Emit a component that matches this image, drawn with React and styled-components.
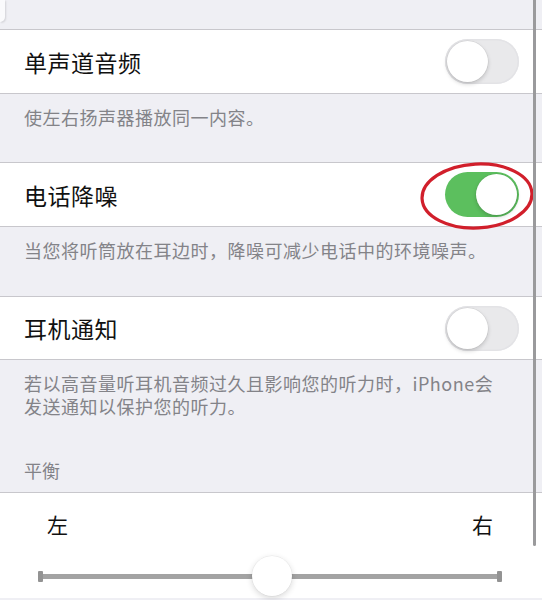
import React from "react";
import styled, { createGlobalStyle } from "styled-components";

const Global = createGlobalStyle`
  html, body { margin: 0; padding: 0; background: #efeff4; }
  body { font-family: "Noto Sans CJK SC", "Noto Sans", sans-serif; -webkit-font-smoothing: antialiased; }
`;

const Screen = styled.div`
  position: relative;
  width: 542px;
  height: 600px;
  overflow: hidden;
  background: #efeff4;
`;

const TopStrip = styled.div`
  height: 29px;
  display: flex;
  align-items: flex-start;
`;

const CardCorner = styled.div`
  width: 5px;
  height: 22px;
  background: #fafafc;
  border-bottom-right-radius: 5px;
  box-shadow: 1px 1px 2px rgba(0, 0, 0, 0.12);
`;

const Cell = styled.div`
  position: relative;
  background: #fff;
  border-top: 1px solid #c8c7cc;
  border-bottom: 1px solid #c8c7cc;
  height: ${(p) => p.$h || 63}px;
  padding: 0 23px 0 24px;
  display: flex;
  align-items: center;
  justify-content: space-between;
  box-sizing: content-box;
`;

const Title = styled.span`
  font-size: 23px;
  color: #111;
  letter-spacing: 0.5px;
`;

const Footer = styled.div`
  height: ${(p) => p.$h}px;
  box-sizing: border-box;
  padding: 12px 20px 0 24px;
  display: flex;
  flex-direction: column;
`;

const FooterText = styled.p`
  margin: 0;
  font-size: 18px;
  line-height: 23px;
  color: #838388;
  letter-spacing: 0.5px;
`;

const GroupHeader = styled.div`
  margin-top: auto;
  padding-bottom: 10px;
  font-size: 18px;
  line-height: 23px;
  color: #838388;
`;

const Track = styled.div`
  position: relative;
  width: 74px;
  height: 45px;
  border-radius: 23px;
  box-sizing: border-box;
  background: ${(p) => (p.$on ? "#5cbf5e" : "#e9e9eb")};
  box-shadow: ${(p) => (p.$on ? "none" : "inset 0 0 0 1.5px #e3e3e6")};
  flex-shrink: 0;
`;

const Knob = styled.div`
  position: absolute;
  top: 2px;
  left: ${(p) => (p.$on ? "31px" : "2px")};
  width: 41px;
  height: 41px;
  border-radius: 50%;
  background: #fff;
  box-shadow: 0 2px 4px rgba(0, 0, 0, 0.18), 0 0 0 0.5px rgba(0, 0, 0, 0.08);
`;

const Circle = styled.svg`
  position: absolute;
  right: 5px;
  top: -2px;
  pointer-events: none;
`;

const Toggle = ({ on }) => (
  <Track $on={on}>
    <Knob $on={on} />
  </Track>
);

const BalanceCell = styled.div`
  background: #fff;
  border-top: 1px solid #c8c7cc;
  height: 105px;
  display: flex;
  flex-direction: column;
`;

const Ends = styled.div`
  display: flex;
  justify-content: space-between;
  padding: 17px 49px 0 47px;
  font-size: 21px;
  line-height: 29px;
  color: #111;
`;

const SliderWrap = styled.div`
  position: relative;
  margin: 17px 40px 0 38px;
  height: 40px;
  display: flex;
  align-items: center;
`;

const Rail = styled.div`
  position: relative;
  flex: 1;
  height: 5px;
  background: #a3a3a3;
`;

const Cap = styled.div`
  position: absolute;
  top: -3px;
  ${(p) => (p.$side === "left" ? "left: 0;" : "right: 0;")}
  width: 5px;
  height: 11px;
  background: #939393;
  border-radius: 1px;
`;

const Thumb = styled.div`
  position: absolute;
  top: 0;
  width: 40px;
  height: 40px;
  margin-left: -20px;
  border-radius: 50%;
  background: #fff;
  box-shadow: 0 2px 6px rgba(0, 0, 0, 0.16), 0 0 0 0.5px rgba(0, 0, 0, 0.06);
`;

const ScrollBar = styled.div`
  position: absolute;
  top: 0;
  right: 6px;
  width: 3px;
  height: 546px;
  border-radius: 0 0 2px 2px;
  background: #9a9a9c;
`;

export default function App() {
  const balance = 0.504;
  return (
    <>
      <Global />
      <Screen>
        <TopStrip>
          <CardCorner />
        </TopStrip>
        <Cell>
          <Title>单声道音频</Title>
          <Toggle on={false} />
        </Cell>
        <Footer $h={68}>
          <FooterText>使左右扬声器播放同一内容。</FooterText>
        </Footer>
        <Cell>
          <Title>电话降噪</Title>
          <Toggle on />
          <Circle width="118" height="70" viewBox="0 0 118 70">
            <ellipse cx="58" cy="35" rx="55" ry="32" fill="none" stroke="#d11f2b" strokeWidth="3.2" transform="rotate(-3 58 35)" />
          </Circle>
        </Cell>
        <Footer $h={69}>
          <FooterText>当您将听筒放在耳边时，降噪可减少电话中的环境噪声。</FooterText>
        </Footer>
        <Cell $h={62}>
          <Title>耳机通知</Title>
          <Toggle on={false} />
        </Cell>
        <Footer $h={132}>
          <FooterText>
            若以高音量听耳机音频过久且影响您的听力时，iPhone会
            <br />
            发送通知以保护您的听力。
          </FooterText>
          <GroupHeader>平衡</GroupHeader>
        </Footer>
        <BalanceCell>
          <Ends>
            <span>左</span>
            <span>右</span>
          </Ends>
          <SliderWrap>
            <Rail>
              <Cap $side="left" />
              <Cap $side="right" />
            </Rail>
            <Thumb style={{ left: `${balance * 100}%` }} />
          </SliderWrap>
        </BalanceCell>
        <ScrollBar />
      </Screen>
    </>
  );
}
